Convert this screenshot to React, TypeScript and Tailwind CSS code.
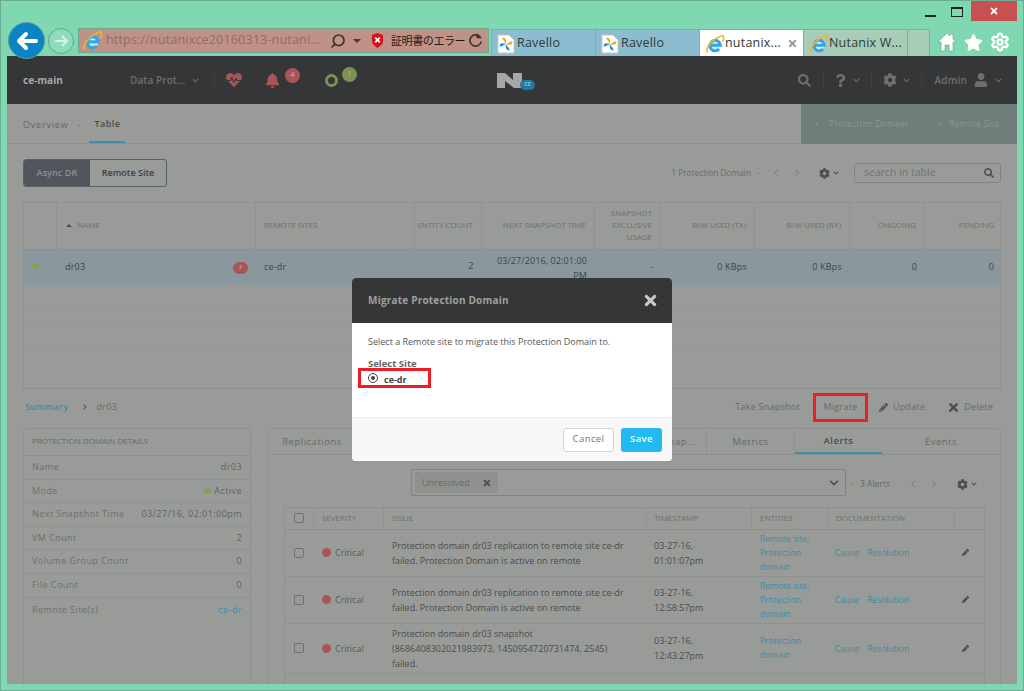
import { FaBell, FaChevronDown, FaChevronLeft, FaChevronRight, FaCog, FaHeartbeat, FaPencilAlt, FaQuestion, FaSearch, FaStar, FaTimes, FaUser } from "react-icons/fa";
import { Search, Settings } from "lucide-react";

const FONT = "font-['Open_Sans','Liberation_Sans',sans-serif]";

function IeIcon({ size = 20 }: { size?: number }) {
  return (
    <svg width={size} height={size} viewBox="0 0 24 24" className="shrink-0">
      <circle cx="12" cy="13" r="7" fill="#d3eefb" />
      <path d="M6.5 13.5h12A6.3 6.3 0 1 0 17 18" fill="none" stroke="#35a7e0" strokeWidth="3.6" />
      <path d="M3 22C0 17 9 5 21 2c2 1 2 4 0 7" fill="none" stroke="#f0b429" strokeWidth="1.9" />
    </svg>
  );
}

function RavelloIcon() {
  return (
    <svg width="18" height="20" viewBox="0 0 18 20" className="shrink-0">
      <path d="M1 1h11l5 5v13H1z" fill="#fff" stroke="#c8c8c8" />
      <path d="M9 10 5 4c3-1 5 1 4 6zM9 10l6-3c1 3-1 5-6 3z" fill="#f2a71b" />
      <path d="M9 10l4 6c-3 1-5-1-4-6zM9 10l-6 3c-1-3 1-5 6-3z" fill="#2a93c9" />
    </svg>
  );
}

function Tab({ label, bg, icon, close, gap }: { label: string; bg: string; icon: React.ReactNode; close?: boolean; gap: string }) {
  return (
    <div className={`flex h-[27px] w-[104px] items-center border-r border-[#6fb79a] pl-[5px] font-['Open_Sans',sans-serif] text-[12.5px] tracking-[0.2px] text-[#2c3a38] ${bg} ${gap}`}>
      {icon}
      <span className="whitespace-nowrap">{label}</span>
      {close && <FaTimes className="ml-[6px] text-[11px] text-[#9a9a9a]" />}
    </div>
  );
}

function BrowserChrome() {
  return (
    <div className="h-[55px] shrink-0">
      <div className="flex h-[21px] items-start justify-end pr-[6px]">
        <div className="mr-[15px] mt-[14px] h-[2px] w-[11px] bg-[#222]" />
        <div className="mr-[8px] mt-[6px] h-[10px] w-[12px] border border-t-[2px] border-[#222]" />
        <div className="flex h-[20px] w-[46px] items-center justify-center bg-[#c75050]">
          <FaTimes className="text-[10px] text-white" />
        </div>
      </div>
      <div className="flex h-[34px] items-start">
        <div className="z-10 ml-[7px] flex h-[37px] w-[37px] shrink-0 items-center justify-center rounded-full border border-[#5e9f96] bg-[#0a84c4]">
          <svg width="22" height="20" viewBox="0 0 22 20">
            <path d="M10 3 3 10l7 7M3 10h17" fill="none" stroke="#fff" strokeWidth="4" strokeLinecap="round" strokeLinejoin="round" />
          </svg>
        </div>
        <div className="ml-[3px] mt-[6px] flex h-[26px] w-[26px] shrink-0 items-center justify-center rounded-full border border-[#5fa78c] bg-[#8edcbc]">
          <svg width="14" height="12" viewBox="0 0 14 12">
            <path d="M8 1l5 5-5 5M13 6H1" fill="none" stroke="#d8f3e8" strokeWidth="2" />
          </svg>
        </div>
        <div className="ml-[4px] mt-[6px] flex h-[25px] w-[411px] shrink-0 items-center border border-[#6aa98f] bg-[#c09187] pl-[3px] font-['Open_Sans',sans-serif]">
          <IeIcon size={21} />
          <span className="ml-[3px] w-[219px] whitespace-nowrap text-[12.5px] tracking-[0.18px] text-[#8a6e68]">https://nutanixce20160313-nutani...</span>
          <Search className="ml-[5px] h-[16px] w-[16px] -scale-x-100 text-[#3d3230]" strokeWidth={2.6} />
          <span className="ml-[7px] h-0 w-0 border-x-[4px] border-t-[4px] border-x-transparent border-t-[#4a3c39]" />
          <svg width="13" height="15" viewBox="0 0 14 16" className="ml-[10px]">
            <path d="M7 0l6 2v6c0 4-3 6-6 8-3-2-6-4-6-8V2z" fill="#d2141c" />
            <path d="M4.5 5l5 5M9.5 5l-5 5" stroke="#fff" strokeWidth="1.8" />
          </svg>
          <span className="ml-[7px] w-[71px] whitespace-nowrap font-['Noto_Sans_CJK_JP',sans-serif] text-[11px] tracking-[-0.4px] text-[#1f1a19]">証明書のエラー</span>
          <svg width="15" height="15" viewBox="0 0 14 14" className="ml-[6px]">
            <path d="M11.5 4A5.3 5.3 0 1 0 12.3 8" fill="none" stroke="#3d3230" strokeWidth="1.6" />
            <path d="M8 0v5h5z" fill="#3d3230" />
          </svg>
        </div>
        <div className="ml-[2px] mt-[7px] flex border border-b-0 border-[#6fb79a]">
          <Tab label="Ravello" bg="bg-[#8cbccf]" icon={<RavelloIcon />} gap="gap-[2px]" />
          <Tab label="Ravello" bg="bg-[#8cbccf]" icon={<RavelloIcon />} gap="gap-[2px]" />
          <Tab label="nutanix..." bg="bg-white" icon={<IeIcon />} close gap="gap-0" />
          <Tab label="Nutanix W..." bg="bg-[#a8ccb8]" icon={<IeIcon />} gap="gap-0" />
          <div className="h-[27px] w-[21px] bg-[#a8ccb8]" />
        </div>
        <div className="ml-[7px] mt-[10px] flex items-center gap-[7px]">
          <svg width="20" height="20" viewBox="0 0 20 20">
            <path d="M1 10 10 1l3 3V2h3v5l3 3h-3v9h-4v-6H8v6H4v-9z" fill="#fff" stroke="#5f9f88" strokeWidth=".6" />
          </svg>
          <FaStar className="text-[19px] text-white" />
          <Settings className="h-[20px] w-[20px] text-white" strokeWidth={2.8} />
        </div>
      </div>
    </div>
  );
}

function Sep() {
  return <span className="h-[1px] w-[1px] shrink-0 bg-[#666]" />;
}

function Divider({ ml }: { ml: string }) {
  return <span className={`h-[22px] w-[1px] shrink-0 bg-[#3e3f41] ${ml}`} />;
}

function Logo() {
  return (
    <svg width="25" height="15" viewBox="0 0 25 15">
      <path d="M0 0h8l8 7V0h9v15h-8L8 8v7H0z" fill="#a6a6a6" />
    </svg>
  );
}

function AppHeader() {
  return (
    <div className="relative flex h-[48px] shrink-0 items-center bg-[#353638] text-[#8b8b8b]">
      <div className="flex h-full w-[106px] items-center bg-[#353638] pl-[16px] text-[10px] font-bold text-[#a8a8a8]">ce-main</div>
      <div className="flex w-[101px] items-center pl-[17px] text-[10px] font-semibold tracking-[0.1px] text-[#6f6f6f]">
        Data Prot...
        <FaChevronDown className="ml-[7px] text-[7px]" />
      </div>
      <Divider ml="" />
      <FaHeartbeat className="ml-[11px] text-[16px] text-[#a85556]" />
      <span className="ml-[11px]"><Sep /></span>
      <div className="relative ml-[12px]">
        <FaBell className="text-[15px] text-[#a85556]" />
        <span className="absolute -right-[20px] -top-[5px] flex h-[15px] w-[15px] items-center justify-center rounded-full bg-[#a85556] text-[7px] text-[#d8b0b0]">4</span>
      </div>
      <span className="ml-[33px]"><Sep /></span>
      <div className="relative ml-[12px]">
        <div className="h-[13px] w-[13px] rounded-full border-[3px] border-[#7c9252]" />
        <span className="absolute -right-[19px] -top-[7px] flex h-[15px] w-[15px] items-center justify-center rounded-full bg-[#7c9252] text-[7px] text-[#b7c496]">1</span>
      </div>
      <div className="ml-[159px] flex items-end">
        <Logo />
        <span className="-mb-[2px] -ml-[2px] flex h-[10px] w-[15px] items-center justify-center rounded-full bg-[#23799f] text-[5.5px] font-bold text-[#8fc0d6]">CE</span>
      </div>
      <div className="ml-auto flex items-center pr-[15px] text-[#6f6f6f]">
        <FaSearch className="text-[13px]" />
        <Divider ml="ml-[12px]" />
        <FaQuestion className="ml-[10px] text-[13px]" />
        <FaChevronDown className="ml-[6px] text-[7px]" />
        <Divider ml="ml-[11px]" />
        <FaCog className="ml-[11px] text-[14px]" />
        <FaChevronDown className="ml-[6px] text-[7px]" />
        <Divider ml="ml-[11px]" />
        <span className="ml-[12px] text-[10px] font-semibold tracking-[0.2px]">Admin</span>
        <FaUser className="ml-[7px] text-[14px]" />
        <FaChevronDown className="ml-[7px] text-[7px]" />
      </div>
    </div>
  );
}

function SubNav() {
  return (
    <div className="flex h-[40px] shrink-0 border-b border-[#8d908e] text-[9px] tracking-[0.5px]">
      <div className="ml-[16px] flex h-full items-center pt-[3px] tracking-[0.8px] text-[#646664]">Overview</div>
      <div className="ml-[11px] flex h-full items-center pt-[3px]"><Sep /></div>
      <div className="ml-[9px] flex h-full w-[36px] items-center justify-center border-b-[2px] border-[#3e8fae] pt-[3px] font-semibold text-[#4a4c4a]">Table</div>
      <div className="ml-auto flex h-[40px] w-[216px] items-center bg-[#6f7e7a] pl-[13px] text-[8.5px] tracking-[0.25px] text-[#8b9793]">
        <span>+</span>
        <span className="ml-[10px]">Protection Domain</span>
        <span className="ml-[29px]">+</span>
        <span className="ml-[7px]">Remote Site</span>
      </div>
    </div>
  );
}

function Toolbar() {
  return (
    <div className="flex h-[58px] shrink-0 items-start pl-[16px]">
      <div className="mt-[15px] flex h-[28px] w-[144px] overflow-hidden rounded-[3px] border border-[#5b6166] text-[9px] font-semibold">
        <div className="flex w-[66px] items-center justify-center bg-[#50565c] tracking-[0.1px] text-[#8c9196]">Async DR</div>
        <div className="flex flex-1 items-center justify-center text-[#3e403f]">Remote Site</div>
      </div>
      <div className="ml-auto mr-[16px] mt-[19px] flex items-center text-[#6c6e6c]">
        <span className="mr-[7px] text-[8.5px] tracking-[-0.1px]">1 Protection Domain</span>
        <Sep />
        <FaChevronLeft className="ml-[13px] text-[8px] text-[#858785]" />
        <FaChevronRight className="ml-[13px] text-[8px] text-[#858785]" />
        <span className="ml-[12px]"><Sep /></span>
        <FaCog className="ml-[6px] text-[11px] text-[#4d4f4d]" />
        <FaChevronDown className="ml-[3px] text-[6px] text-[#4d4f4d]" />
        <span className="ml-[8px]"><Sep /></span>
        <div className="ml-[7px] flex h-[20px] w-[147px] items-center justify-between rounded-[3px] border border-[#818482] pl-[9px] pr-[6px] text-[10.5px] text-[#727472]">
          search in table
          <FaSearch className="text-[10px] text-[#4d4f4d]" />
        </div>
      </div>
    </div>
  );
}

const HEAD_COLS = "grid-cols-[33px_199px_159px_67px_113px_66px_94px_95px_75px_77px]";

function HeadCell({ children, right }: { children?: React.ReactNode; right?: boolean }) {
  return (
    <div className={`flex items-center border-r border-[#8f928f] px-[8px] pb-[2px] text-[8px] leading-[12px] text-[#6d6f6d] last:border-r-0 ${right ? "justify-end text-right" : ""}`}>
      {children}
    </div>
  );
}

function MainTable() {
  return (
    <div className="mx-[16px] h-[187px] shrink-0 overflow-hidden rounded-[2px] border border-[#8d908e]">
      <div className={`grid h-[47px] border-b border-[#8d908e] ${HEAD_COLS}`}>
        <HeadCell />
        <HeadCell><span className="mr-[5px] ml-[1px] h-0 w-0 border-x-[3px] border-b-[3px] border-x-transparent border-b-[#4a4c4a]" />NAME</HeadCell>
        <HeadCell>REMOTE SITES</HeadCell>
        <HeadCell right><span className="shrink-0 whitespace-nowrap">ENTITY COUNT</span></HeadCell>
        <HeadCell right>NEXT SNAPSHOT TIME</HeadCell>
        <HeadCell right>SNAPSHOT EXCLUSIVE USAGE</HeadCell>
        <HeadCell right>B/W USED (TX)</HeadCell>
        <HeadCell right>B/W USED (RX)</HeadCell>
        <HeadCell right>ONGOING</HeadCell>
        <HeadCell right>PENDING</HeadCell>
      </div>
      <div className={`grid h-[35px] bg-[#8a989e] pb-[2px] text-[9px] tracking-[0.2px] text-[#3f4446] ${HEAD_COLS}`}>
        <div className="flex items-center pl-[8px]"><span className="h-[7px] w-[7px] shrink-0 rounded-full bg-[#87a055]" /></div>
        <div className="flex items-center justify-between pl-[8px] pr-[8px]">
          dr03
          <span className="mt-[2px] flex h-[12px] w-[15px] items-center justify-center rounded-full bg-[#a85556] text-[6px] text-[#d8b0b0]">3</span>
        </div>
        <div className="flex items-center pl-[8px]">ce-dr</div>
        <div className="flex items-center justify-end pr-[8px] text-[9.5px]">2</div>
        <div className="flex flex-col items-end justify-center whitespace-nowrap pr-[8px] pt-[2px] leading-[15px] tracking-[0.1px]">
          <div>03/27/2016, 02:01:00</div>
          <div>PM</div>
        </div>
        <div className="flex items-center justify-end pr-[8px]">-</div>
        <div className="flex items-center justify-end pr-[8px]">0 KBps</div>
        <div className="flex items-center justify-end pr-[8px]">0 KBps</div>
        <div className="flex items-center justify-end pr-[8px]">0</div>
        <div className="flex items-center justify-end pr-[8px]">0</div>
      </div>
      <div className="h-[21px] border-b border-[#939693]" />
      <div className="h-[20px] border-b border-[#939693]" />
      <div className="h-[21px] border-b border-[#939693]" />
      <div className="h-[21px]" />
    </div>
  );
}

function ActionBar() {
  return (
    <div className="flex h-[39px] shrink-0 items-center pb-[3px] pl-[18px] pr-[24px] text-[9px] tracking-[0.25px] text-[#686a68]">
      <span className="font-semibold text-[#3f8aa8]">Summary</span>
      <FaChevronRight className="ml-[13px] text-[6px] text-[#4d4f4d]" />
      <span className="ml-[9px]">dr03</span>
      <span className="ml-auto">Take Snapshot</span>
      <div className="ml-[13px] flex h-[29px] w-[55px] items-center justify-center border-[3px] border-[#ee1c25]">Migrate</div>
      <FaPencilAlt className="ml-[11px] text-[9px] text-[#4d4f4d]" />
      <span className="ml-[5px]">Update</span>
      <FaTimes className="ml-[22px] text-[13px] text-[#4d4f4d]" />
      <span className="ml-[4px]">Delete</span>
    </div>
  );
}

const DETAILS: [string, React.ReactNode, string][] = [
  ["Name", "dr03", "h-[24px]"],
  ["Mode", <span className="flex items-center gap-[3px]"><span className="h-[7px] w-[7px] rounded-full bg-[#87a055]" />Active</span>, "h-[23px]"],
  ["Next Snapshot Time", "03/27/16, 02:01:00pm", "h-[24px]"],
  ["VM Count", "2", "h-[23px]"],
  ["Volume Group Count", "0", "h-[24px]"],
  ["File Count", "0", "h-[24px]"],
  ["Remote Site(s)", <span className="text-[#3f8aa8]">ce-dr</span>, "h-[24px]"],
];

function DetailsPanel() {
  return (
    <div className="h-[300px] w-[228px] shrink-0 rounded-t-[3px] border border-[#8d908e]">
      <div className="flex h-[27px] items-center border-b border-[#8d908e] pb-[2px] pl-[8px] text-[8px] text-[#676967]">PROTECTION DOMAIN DETAILS</div>
      {DETAILS.map(([label, value, h]) => (
        <div key={label} className={`flex items-center justify-between border-b border-[#8f928f] pb-[1px] pl-[8px] pr-[8px] text-[9px] tracking-[0.45px] text-[#5f615f] last:border-b-0 ${h}`}>
          <span className="text-[#6d6f6d]">{label}</span>
          <span>{value}</span>
        </div>
      ))}
    </div>
  );
}

const ALERTS = [
  { issue: ["Protection domain dr03 replication to remote site ce-dr", "failed. Protection Domain is active on remote"], time: ["03-27-16,", "01:01:07pm"], ent: ["Remote site,", "Protection", "domain"], h: "h-[47px]" },
  { issue: ["Protection domain dr03 replication to remote site ce-dr", "failed. Protection Domain is active on remote"], time: ["03-27-16,", "12:58:57pm"], ent: ["Remote site,", "Protection", "domain"], h: "h-[47px]" },
  { issue: ["Protection domain dr03 snapshot", "(8686408302021983973, 1450954720731474, 2545)", "failed."], time: ["03-27-16,", "12:43:27pm"], ent: ["Protection", "domain"], h: "h-[50px]" },
];

const ALERT_COLS = "grid-cols-[29px_70px_263px_105px_76px_127px_28px]";

function AlertsTable() {
  return (
    <div className="ml-[16px] h-[200px] w-[701px] rounded-t-[2px] border border-[#8d908e]">
      <div className={`grid h-[22px] border-b border-[#8d908e] pb-[2px] text-[8px] text-[#6d6f6d] ${ALERT_COLS}`}>
        <div className="flex items-center justify-center border-r border-[#8f928f]"><span className="h-[10px] w-[10px] rounded-[2px] border border-[#707270]" /></div>
        <div className="flex items-center border-r border-[#8f928f] pl-[8px]">SEVERITY</div>
        <div className="flex items-center border-r border-[#8f928f] pl-[8px]">ISSUE</div>
        <div className="flex items-center border-r border-[#8f928f] pl-[7px]">TIMESTAMP</div>
        <div className="flex items-center border-r border-[#8f928f] pl-[8px]">ENTITIES</div>
        <div className="flex items-center border-r border-[#8f928f] pl-[8px]">DOCUMENTATION</div>
        <div />
      </div>
      {ALERTS.map((a) => (
        <div key={a.time[1]} className={`grid border-b border-[#8f928f] pb-[1px] text-[9px] leading-[15px] text-[#4a4c4a] ${ALERT_COLS} ${a.h}`}>
          <div className="flex items-center justify-center"><span className="-ml-[2px] h-[10px] w-[10px] rounded-[2px] border border-[#707270]" /></div>
          <div className="flex items-center pl-[8px] text-[#5a5c5a]"><span className="mr-[4px] h-[9px] w-[9px] rounded-full bg-[#a85556]" />Critical</div>
          <div className="flex flex-col justify-center whitespace-nowrap pl-[8px]">{a.issue.map((l) => <div key={l}>{l}</div>)}</div>
          <div className="flex flex-col justify-center pl-[7px]">{a.time.map((l) => <div key={l}>{l}</div>)}</div>
          <div className="flex flex-col justify-center pl-[8px] text-[8.5px] leading-[14px] text-[#3f8aa8]">{a.ent.map((l) => <div key={l}>{l}</div>)}</div>
          <div className="flex items-center gap-[8px] pl-[7px] text-[8.5px] text-[#3f8aa8]"><span>Cause</span><span>Resolution</span></div>
          <div className="flex items-center"><FaPencilAlt className="ml-[7px] text-[7px] text-[#3f413f]" /></div>
        </div>
      ))}
    </div>
  );
}

function AlertsPanel() {
  return (
    <div className="ml-[16px] h-[300px] w-[734px] shrink-0 rounded-t-[3px] border border-[#8d908e]">
      <div className="flex h-[26px] border-b border-[#8d908e] pt-[1px] text-[9.5px] tracking-[0.5px] text-[#676967]">
        <div className="flex w-[88px] items-center justify-center">Replications</div>
        <div className="flex w-[351px] items-center justify-end border-r border-[#8f928f] pr-[10px]">nap...</div>
        <div className="flex w-[88px] items-center justify-center border-r border-[#8f928f]">Metrics</div>
        <div className="flex w-[87px] items-center justify-center border-b-[2px] border-[#3e8fae] font-semibold text-[#4a4c4a]">Alerts</div>
        <div className="flex flex-1 items-center justify-center">Events</div>
      </div>
      <div className="flex h-[52px] items-start pl-[143px] pt-[14px]">
        <div className="flex h-[27px] w-[435px] items-center justify-between rounded-[2px] border border-[#818482] pl-[3px] pr-[6px]">
          <div className="flex h-[21px] w-[83px] items-center justify-between rounded-[2px] bg-[#8f918f] pl-[7px] pr-[6px] text-[9px] text-[#676967]">
            Unresolved
            <FaTimes className="text-[10px] text-[#4d4f4d]" />
          </div>
          <FaChevronDown className="text-[10px] text-[#4d4f4d]" />
        </div>
        <div className="ml-[6px] mt-[9px] flex items-center text-[#676967]">
          <Sep />
          <span className="ml-[7px] text-[8.5px]">3 Alerts</span>
          <span className="ml-[6px]"><Sep /></span>
          <FaChevronLeft className="ml-[13px] text-[8px] text-[#858785]" />
          <FaChevronRight className="ml-[13px] text-[8px] text-[#858785]" />
          <span className="ml-[13px]"><Sep /></span>
          <FaCog className="ml-[6px] text-[11px] text-[#4d4f4d]" />
          <FaChevronDown className="ml-[3px] text-[6px] text-[#4d4f4d]" />
        </div>
      </div>
      <AlertsTable />
    </div>
  );
}

function MigrateModal() {
  return (
    <div className="absolute left-[345px] top-[222px] flex h-[183px] w-[320px] flex-col overflow-hidden rounded-[4px] bg-white">
      <div className="flex h-[45px] shrink-0 items-center justify-between bg-[#353638] pl-[16px] pr-[13px] text-[10px] font-bold tracking-[0.2px] text-[#a0a0a0]">
        Migrate Protection Domain
        <FaTimes className="text-[17px] text-[#c8c8c8]" />
      </div>
      <div className="h-[94px] shrink-0 pl-[16px] pt-[12px] text-[9px] text-[#555]">
        <div>Select a Remote site to migrate this Protection Domain to.</div>
        <div className="mt-[10px] text-[9.5px] font-bold leading-[10px] text-[#666]">Select Site</div>
        <div className="-ml-[10px] -mt-[1px] flex h-[20px] w-[73px] items-center border-[3px] border-[#ee1c25] pl-[7px]">
          <span className="flex h-[10px] w-[10px] items-center justify-center rounded-full border border-[#444]"><span className="h-[4px] w-[4px] rounded-full bg-[#444]" /></span>
          <span className="ml-[6px] pt-[4px] font-bold text-[#444]">ce-dr</span>
        </div>
      </div>
      <div className="flex flex-1 items-center justify-end gap-[7px] border-t border-[#f0f0f0] bg-[#f8f8f8] pr-[10px] text-[9.5px] tracking-[0.4px]">
        <div className="flex h-[24px] w-[51px] items-center justify-center rounded-[3px] border border-[#d5d5d5] bg-white text-[#777]">Cancel</div>
        <div className="flex h-[24px] w-[41px] items-center justify-center rounded-[3px] bg-[#22b8f0] font-semibold text-white">Save</div>
      </div>
    </div>
  );
}

export default function App() {
  return (
    <div className={`flex h-[691px] w-[1024px] flex-col overflow-hidden border border-[#6aae92] bg-[#80d8b2] ${FONT}`}>
      <BrowserChrome />
      <div className="relative ml-[6px] flex h-[628px] w-[1010px] shrink-0 flex-col overflow-hidden bg-[#999b99]">
        <AppHeader />
        <SubNav />
        <Toolbar />
        <MainTable />
        <ActionBar />
        <div className="flex pl-[16px]">
          <DetailsPanel />
          <AlertsPanel />
        </div>
        <MigrateModal />
      </div>
    </div>
  );
}
